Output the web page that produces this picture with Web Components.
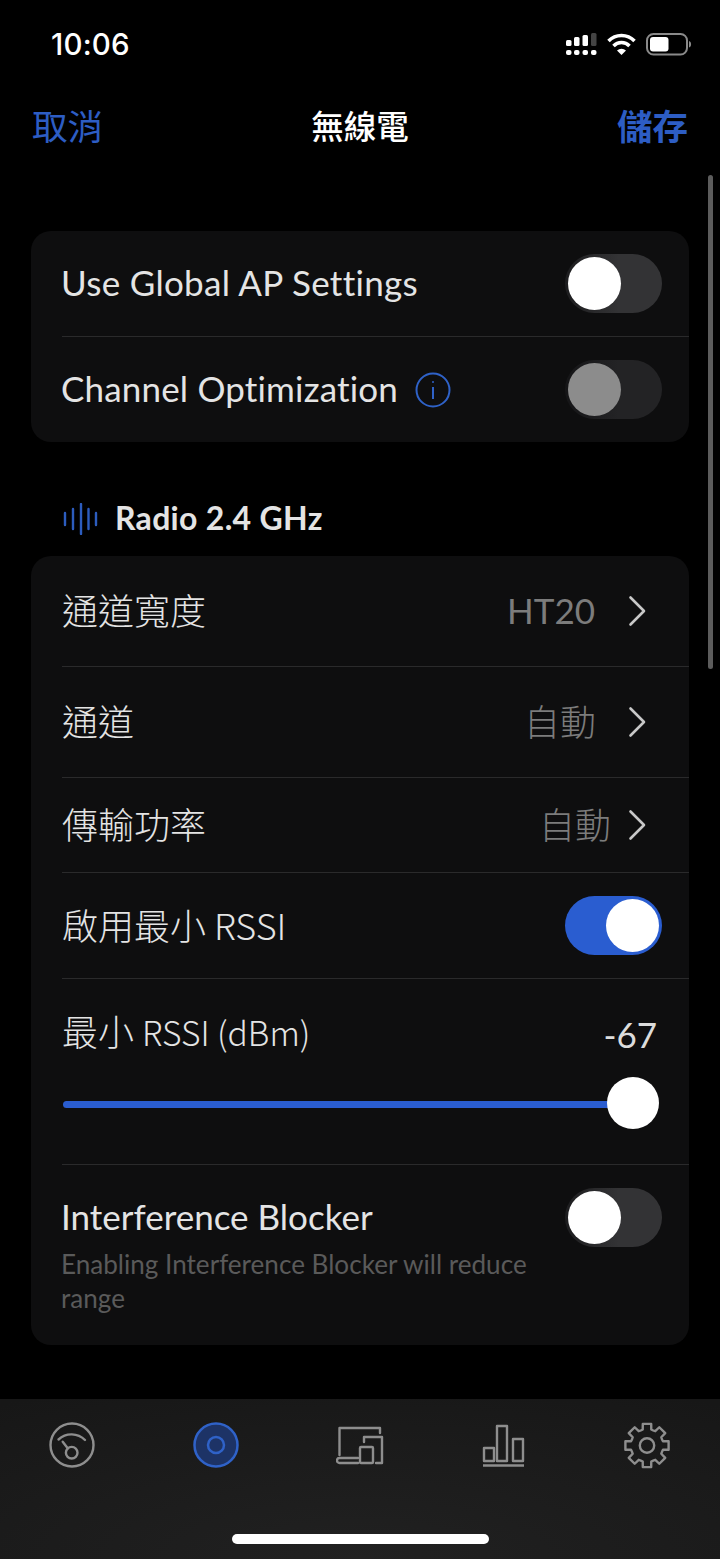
<!DOCTYPE html>
<html lang="zh-Hant"><head><meta charset="utf-8"><title>無線電</title>
<style>
html,body{margin:0;padding:0;background:#000;}
body{width:720px;height:1559px;overflow:hidden;font-family:Lato,"Noto Sans CJK TC",sans-serif;color:#e4e4e4;}
</style></head><body>
<app-screen></app-screen>
<script>
const F='Lato,"Noto Sans CJK TC",sans-serif';
function def(name,css,html){
  class C extends HTMLElement{
    constructor(){super();const r=this.attachShadow({mode:'open'});r.innerHTML='<style>'+css+'</style>'+html;}
  }
  customElements.define(name,C);
}
function gear(cx,cy,ro,ri){
  let d='';const p=(r,a)=>{const t=(a-90)*Math.PI/180;return (cx+r*Math.cos(t)).toFixed(2)+' '+(cy+r*Math.sin(t)).toFixed(2)};
  for(let i=0;i<8;i++){const a=i*45;
    d+=(i?'L':'M')+p(ro,a-11)+'L'+p(ro,a+11)+'L'+p(ri,a+15)+'A'+(ri-1)+' '+(ri-1)+' 0 0 0 '+p(ri,a+30);
  }
  return d+'Z';
}
def('status-bar',`:host{display:flex;height:88px;box-sizing:border-box;padding:0 28px 0 51px;align-items:center;justify-content:space-between;color:#fff}
.t{font:500 29.5px Inter,sans-serif;letter-spacing:.2px}
svg{display:block}`,
`<span class="t">10:06</span><svg width="128" height="26" viewBox="0 0 128 26" fill="#fff">
<g><rect x="2" y="9" width="5.500" height="6" rx="1.500"/><rect x="10" y="6" width="5.500" height="9" rx="1.500"/><rect x="18.500" y="4" width="5.500" height="11" rx="1.500"/><rect x="27" y="2" width="5.500" height="13" rx="1.500" fill="#444"/>
<rect x="2" y="19" width="5.500" height="5" rx="2"/><rect x="10" y="19" width="5.500" height="5" rx="2"/><rect x="18.500" y="19" width="5.500" height="5" rx="2"/><rect x="27" y="19" width="5.500" height="5" rx="2"/></g>
<g fill="none" stroke="#fff" stroke-width="3.500"><path d="M44.500 10a18 18 0 0 1 26 0"/><path d="M49.500 15a11 11 0 0 1 16 0"/></g><path d="M53 19.500a7 7 0 0 1 9 0L57.500 24z"/>
<rect x="83" y="3" width="40" height="20.500" rx="6.500" fill="none" stroke="#8a8a8a" stroke-width="2"/><rect x="86" y="6" width="18.500" height="14.500" rx="3"/><path d="M125 10c2.500 .5 3 5.500 0 6.500z" fill="#8a8a8a"/></svg>`);
def('nav-bar',`:host{display:grid;grid-template-columns:1fr auto 1fr;height:72px;box-sizing:border-box;padding:0 32px;align-items:center;font:400 35.500px "Noto Sans CJK TC",sans-serif;color:#fff;margin-bottom:7px}
.l{color:#2d5dc4}.r{color:#2d5dc4;justify-self:end;font-weight:700}.c{font-size:32.500px;font-weight:500}`,
`<span class="l">取消</span><span class="c">無線電</span><span class="r">儲存</span>`);
def('set-card',`:host{display:block;margin:0 31px;background:#0e0e0f;border-radius:20px;overflow:hidden}`,`<slot></slot>`);
def('set-row',`:host{display:flex;flex-direction:column;justify-content:center;box-sizing:border-box;margin-left:31px;padding-right:27px;font:400 35px ${F};color:#e4e4e4}
:host([divider]){border-bottom:1px solid #2a2a2b}
.m{display:flex;align-items:center;justify-content:space-between}
.a{display:flex;align-items:center;gap:17px}
.v{display:flex;align-items:center;color:#7c7c7c}
svg{display:block}`,
`<div class="m"><div class="a"><slot></slot></div><div class="v"><slot name="v"></slot></div></div><slot name="below"></slot>`);
def('tog-gle',`:host{display:block;width:97px;height:59px;border-radius:30px;background:linear-gradient(90deg,#1d1d1f,#333335 55%);position:relative}
:host([on]){background:#2a5dd0}
:host([dim]){background:linear-gradient(90deg,#151517,#232325 55%)}
i{position:absolute;top:3px;left:3px;width:53px;height:53px;border-radius:50%;background:#fff}
:host([on]) i{left:41px}
:host([dim]) i{background:#8c8c8c}`,`<i></i>`);
def('chev-ron',`:host{display:block;width:20px;height:32px;margin-left:32px;margin-right:15px}svg{display:block}`,
`<svg width="20" height="32" viewBox="0 0 20 32" fill="none" stroke="#c8c8c8" stroke-width="2.600" stroke-linecap="round" stroke-linejoin="round"><path d="M3.500 2.500 17 16 3.500 29.500"/></svg>`);
def('info-icon',`:host{display:block;width:36px;height:36px}svg{display:block}`,
`<svg width="36" height="36" viewBox="0 0 36 36" fill="none" stroke="#2f62c8" stroke-width="2"><circle cx="18" cy="18" r="16.500"/><path d="M18 15v12"/><circle cx="18" cy="10" r="1" fill="#2f62c8" stroke="none"/></svg>`);
def('sec-head',`:host{display:flex;align-items:center;gap:15px;padding-left:62px;height:40px;font:700 32px ${F};letter-spacing:.3px;color:#e4e4e4}svg{display:block}span{margin-bottom:3px}`,
`<svg width="38" height="32" viewBox="0 0 38 32" fill="none" stroke="#2c5cbe" stroke-width="2.400" stroke-linecap="round"><path d="M3 10v12M11 6v20M19 1v30M26.500 6v20M34 10v12"/></svg><span><slot></slot></span>`);
def('rssi-slider',`:host{display:block;height:52px;position:relative;margin-top:17px}
b{position:absolute;left:1px;right:30px;top:24px;height:7px;border-radius:4px;background:#2a5dd0}
i{position:absolute;right:3px;top:0;width:52px;height:52px;border-radius:50%;background:#fff}`,`<b></b><i></i>`);
def('tab-bar',`:host{display:block;height:160px;background:radial-gradient(ellipse 620px 190px at 50% 100%,#212121,#171717);position:relative}
.t{display:flex;justify-content:space-between;padding:22px 48px 0 48px}
svg{display:block}
.h{position:absolute;left:232px;bottom:15px;width:257px;height:10px;border-radius:5px;background:#fff}`,
`<div class="t">
<svg width="48" height="48" viewBox="0 0 48 48" fill="none" stroke="#8e8e8e" stroke-width="2.400" stroke-linecap="round"><circle cx="24" cy="24" r="21.500"/><path d="M10.500 18.500A19 19 0 0 1 37 19"/><path d="M14.700 20.700 19.700 27.300"/><circle cx="23.700" cy="31.700" r="5.800"/></svg>
<svg width="48" height="48" viewBox="0 0 48 48"><circle cx="24" cy="24" r="21.500" fill="#1d3366" stroke="#2f62c8" stroke-width="2.500"/><circle cx="24" cy="24" r="8" fill="none" stroke="#2f62c8" stroke-width="2.500"/></svg>
<svg width="48" height="48" viewBox="0 0 48 48" fill="none" stroke="#8e8e8e" stroke-width="2.400" stroke-linejoin="round" stroke-linecap="round"><path d="M3.500 34V7H44V12"/><path d="M28 21V16H46V42H40"/><rect x="24" y="26" width="13" height="16" rx="1"/><path d="M22 37H3.500A2.500 2.500 0 0 0 3.500 42H22"/></svg>
<svg width="48" height="48" viewBox="0 0 48 48" fill="none" stroke="#8e8e8e" stroke-width="2.400" stroke-linejoin="round"><rect x="4" y="27" width="10" height="13"/><rect x="17" y="5" width="10" height="35"/><rect x="33" y="18" width="10" height="22"/><path d="M3 44.500H44" stroke-width="2.600"/></svg>
<svg width="48" height="48" viewBox="0 0 48 48" fill="none" stroke="#8e8e8e" stroke-width="2.400" stroke-linejoin="round"><path d="${gear(23,24.500,22,16.500)}"/><circle cx="23" cy="24.500" r="7.200"/></svg>
</div><div class="h"></div>`);
def('app-screen',`:host{display:block;position:relative;width:720px;height:1559px;background:#000;overflow:hidden}
.body{height:1232px;padding-top:64px;box-sizing:border-box}
.sb{position:absolute;left:708px;top:175px;width:5px;height:494px;border-radius:3px;background:#5c5c5c}
.sh{margin:57px 0 17px}
.cjk{font-family:"Noto Sans CJK TC",sans-serif;font-weight:300;font-size:36px;margin-bottom:4px}
.cjk small{font-size:33.600px}
.lat{margin:0 0 4px -1px}
.val{margin-bottom:2px}
.cv{margin-right:-1px}
.sub{font-size:26.100px;line-height:34px;color:#5a5a5a;margin:0 0 0 -1px;max-width:490px}`,
`<status-bar></status-bar><nav-bar></nav-bar>
<div class="body">
<set-card>
<set-row divider style="height:106px"><span class="lat" style="letter-spacing:.3px">Use Global AP Settings</span><tog-gle slot="v"></tog-gle></set-row>
<set-row style="height:105px"><span class="lat" style="letter-spacing:.17px">Channel Optimization</span><info-icon></info-icon><tog-gle slot="v" dim></tog-gle></set-row>
</set-card>
<sec-head class="sh">Radio 2.4 GHz</sec-head>
<set-card>
<set-row divider style="height:111px"><span class="cjk">通道寬度</span><span slot="v" class="val">HT20</span><chev-ron slot="v"></chev-ron></set-row>
<set-row divider style="height:111px"><span class="cjk">通道</span><span slot="v" class="cjk cv">自動</span><chev-ron slot="v"></chev-ron></set-row>
<set-row divider style="height:95px"><span class="cjk">傳輸功率</span><span slot="v" class="cjk cv">自動</span><chev-ron slot="v" style="margin-left:17px"></chev-ron></set-row>
<set-row divider style="height:106px"><span class="cjk">啟用最小 RSSI</span><tog-gle slot="v" on></tog-gle></set-row>
<set-row divider style="height:186px;justify-content:flex-start;padding-top:25px"><span class="cjk">最小 <small>RSSI (dBm)</small></span><span slot="v" style="color:#dcdcdc;margin:4px 5px 0 0">-67</span><rssi-slider slot="below"></rssi-slider></set-row>
<set-row style="height:180px;justify-content:flex-start;padding-top:23px"><span class="lat">Interference Blocker</span><tog-gle slot="v"></tog-gle><div slot="below" class="sub">Enabling Interference Blocker will reduce range</div></set-row>
</set-card>
</div>
<tab-bar></tab-bar>
<div class="sb"></div>`);
</script>
</body></html>
